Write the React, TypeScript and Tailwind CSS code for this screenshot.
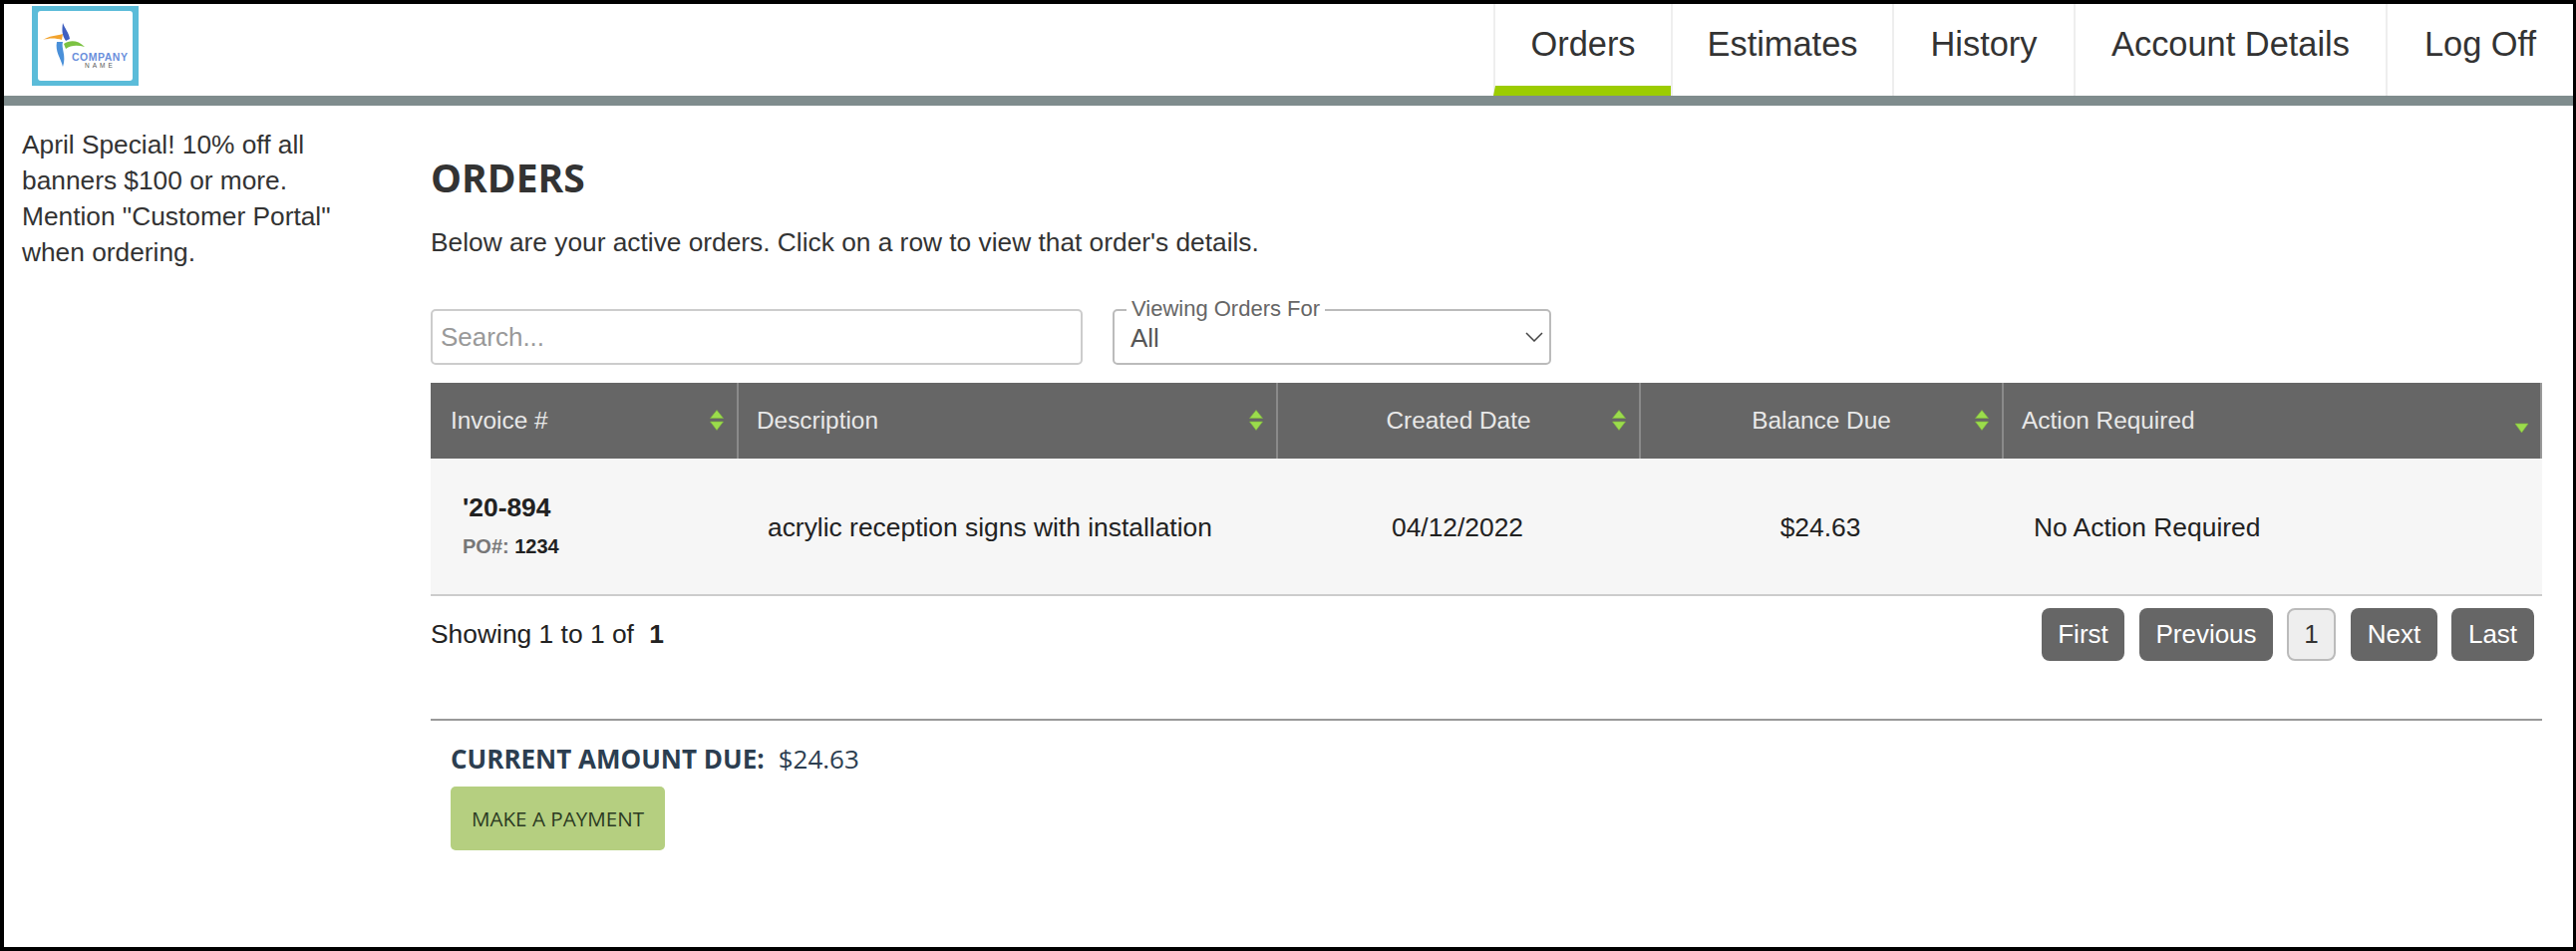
const sans = "font-['Liberation_Sans',Arial,sans-serif]";
const open = "font-['Open_Sans',sans-serif]";

function SortIcon({ up = true }: { up?: boolean }) {
  if (!up) {
    return (
      <svg width="15" height="11" viewBox="0 0 15 11" className="shrink-0">
        <path d="M1 1 H14 L7.5 10 Z" fill="#9bdc4c" stroke="#7fb83c" strokeOpacity="0.6" strokeLinejoin="round" />
      </svg>
    );
  }
  return (
    <svg width="14" height="21" viewBox="0 0 14 21" className="shrink-0">
      <path d="M7 0.5 L13.5 8.5 H0.5 Z" fill="#9bdc4c" stroke="#7fb83c" strokeOpacity="0.6" strokeLinejoin="round" />
      <path d="M0.5 12 H13.5 L7 20.5 Z" fill="#9bdc4c" stroke="#7fb83c" strokeOpacity="0.6" strokeLinejoin="round" />
    </svg>
  );
}

function Logo() {
  return (
    <div className="w-[107px] h-[80px] bg-[#5bbcd9] px-[6px] py-[5px]">
      <div className="relative w-full h-full bg-white rounded-[3px] overflow-hidden">
        <svg width="50" height="50" viewBox="0 0 50 50" className="absolute left-[2px] top-[9px]">
          <path d="M23 3 C22 10 22 15 26 21 L30 19 C29 12 25 9 23 3 Z" fill="#3f5fc0" />
          <path d="M3 20 C9 16 16 16 23 14 L22 20 C16 18 9 18 3 20 Z" fill="#f2a32e" />
          <path d="M24 24 C30 20 38 20 45 27 C38 25 31 25 26 29 Z" fill="#7cc242" />
          <path d="M17 22 L23 22 C21 28 27 36 23 47 C21 38 15 32 17 22 Z" fill="#4a90d9" />
        </svg>
        <div className={`absolute left-[34px] top-[40px] text-[10.5px] leading-[12px] font-semibold text-[#6b8fdc] tracking-[0.5px] ${sans}`}>COMPANY</div>
        <div className={`absolute left-[47px] top-[51px] text-[6.5px] leading-[7px] text-[#555] tracking-[3px] ${sans}`}>NAME</div>
      </div>
    </div>
  );
}

const tabs = [
  { label: "Orders", w: "w-[178px]", active: true },
  { label: "Estimates", w: "w-[222px]" },
  { label: "History", w: "w-[182px]" },
  { label: "Account Details", w: "w-[313px]" },
  { label: "Log Off", w: "w-[188px]" },
];

const cols = [
  { label: "Invoice #", w: "w-[307px]", align: "text-left pl-[20px]" },
  { label: "Description", w: "w-[541px]", align: "text-left pl-[18px]" },
  { label: "Created Date", w: "w-[364px]", align: "text-center" },
  { label: "Balance Due", w: "w-[364px]", align: "text-center" },
  { label: "Action Required", w: "flex-1", align: "text-left pl-[18px]", sorted: true },
];

const pages = [
  { label: "First", w: "w-[83px]", mr: "mr-[15px]" },
  { label: "Previous", w: "w-[134px]", mr: "mr-[14px]" },
  { label: "1", w: "w-[49px]", mr: "mr-[15px]", current: true },
  { label: "Next", w: "w-[87px]", mr: "mr-[14px]" },
  { label: "Last", w: "w-[83px]", mr: "" },
];

export default function App() {
  return (
    <div className={`w-[2584px] h-[954px] border-t-4 border-l-4 border-b-4 border-r-[3px] border-black bg-white text-[#333] overflow-hidden ${sans}`}>
      {/* header */}
      <header className="h-[92px] flex justify-between pl-[28px]">
        <div className="pt-[2px]">
          <Logo />
        </div>
        <nav className="flex">
          {tabs.map((t) => (
            <div
              key={t.label}
              className={`${t.w} flex justify-center pt-[20px] text-[34.4px] leading-[40px] border-l-2 border-[#eee] ${t.active ? "border-b-[10px] border-b-[#9ccc00]" : ""}`}
            >
              {t.label}
            </div>
          ))}
        </nav>
      </header>
      <div className="h-[10px] bg-[#7f8c8d]" />

      <div className="flex">
        {/* sidebar */}
        <aside className="w-[428px] shrink-0 pl-[18px] pt-[21px] pr-[56px] text-[26.3px] leading-[36px]">
          April Special! 10% off all banners $100 or more. Mention "Customer Portal" when ordering.
        </aside>

        {/* main */}
        <main className="w-[2118px]">
          <h1 className={`mt-[49px] text-[39px] leading-[46px] font-bold ${open}`}>ORDERS</h1>
          <p className="mt-[24px] text-[26.3px] leading-[36px]">Below are your active orders. Click on a row to view that order's details.</p>

          <div className="flex mt-[49px] h-[56px]">
            <input
              placeholder="Search..."
              className="w-[654px] h-[56px] border-2 border-[#ccc] rounded-[5px] px-[8px] text-[26px] placeholder:text-[#999] outline-none"
            />
            <div className="relative ml-[30px] w-[440px] h-[56px] border-2 border-[#bbb] rounded-[5px] pl-[16px] pt-[9px] text-[26px] leading-[36px] text-[#555]">
              <span className="absolute left-[12px] top-[-14px] bg-white px-[5px] text-[22px] leading-[24px] text-[#666]">Viewing Orders For</span>
              All
              <svg width="18" height="10" viewBox="0 0 18 10" className="absolute right-[6px] top-[21px]" fill="none" stroke="#444" strokeWidth="1.5">
                <path d="M1 1 L9 9 L17 1" />
              </svg>
            </div>
          </div>

          {/* table */}
          <div className="mt-[18px]">
            <div className="flex h-[76px] bg-[#666] text-[24.4px] text-[#e8e8e8] border-r-2 border-[#999]">
              {cols.map((c, i) => (
                <div
                  key={c.label}
                  className={`${c.w} relative flex items-center ${i > 0 ? "border-l-2 border-[#8a8a8a]" : ""}`}
                >
                  <span className={`w-full ${c.align}`}>{c.label}</span>
                  <div className={`absolute ${c.sorted ? "right-[11px] top-[40px]" : "right-[13px] top-[27px]"}`}>
                    <SortIcon up={!c.sorted} />
                  </div>
                </div>
              ))}
            </div>
            <div className="flex items-center h-[138px] bg-[#f6f6f6] border-b-2 border-[#ccc] text-[26.4px] text-[#222]">
              <div className="w-[307px] pl-[32px]">
                <div className="font-bold text-[26.4px] leading-[32px] -mt-[1px]">'20-894</div>
                <div className="mt-[9px] text-[20px] leading-[28px] font-bold">
                  <span className="text-[#777]">PO#: </span>1234
                </div>
              </div>
              <div className="w-[541px] pl-[31px] pt-[4px]">acrylic reception signs with installation</div>
              <div className="w-[364px] text-center pt-[4px]">04/12/2022</div>
              <div className="w-[364px] text-center pt-[4px]">$24.63</div>
              <div className="flex-1 pl-[32px] pt-[4px]">No Action Required</div>
            </div>
          </div>

          {/* pagination */}
          <div className="flex justify-between items-center mt-[12px] pr-[8px] h-[53px] text-[26px]">
            <div className="text-[#222] text-[26.4px]">
              Showing 1 to 1 of <span className="font-bold ml-[8px]">1</span>
            </div>
            <div className="flex">
              {pages.map((p) => (
                <div
                  key={p.label}
                  className={`${p.w} ${p.mr} h-[53px] flex items-center justify-center rounded-[8px] ${
                    p.current ? "bg-[#eee] border-2 border-[#bbb] text-[#333]" : "bg-[#666] text-white"
                  }`}
                >
                  {p.label}
                </div>
              ))}
            </div>
          </div>

          <div className="mt-[58px] border-t-2 border-[#999] pl-[20px]">
            <div className={`mt-[22px] text-[26px] leading-[32px] text-[#2c3e50] ${open}`}>
              <span className="font-bold">CURRENT AMOUNT DUE:</span>
              <span className="ml-[14px]">$24.63</span>
            </div>
            <div className={`mt-[12px] w-[215px] h-[64px] flex items-center justify-center rounded-[5px] bg-[#b5cf80] text-[20.6px] text-[#2b3a22] ${open}`}>
              MAKE A PAYMENT
            </div>
          </div>
        </main>
      </div>
    </div>
  );
}
